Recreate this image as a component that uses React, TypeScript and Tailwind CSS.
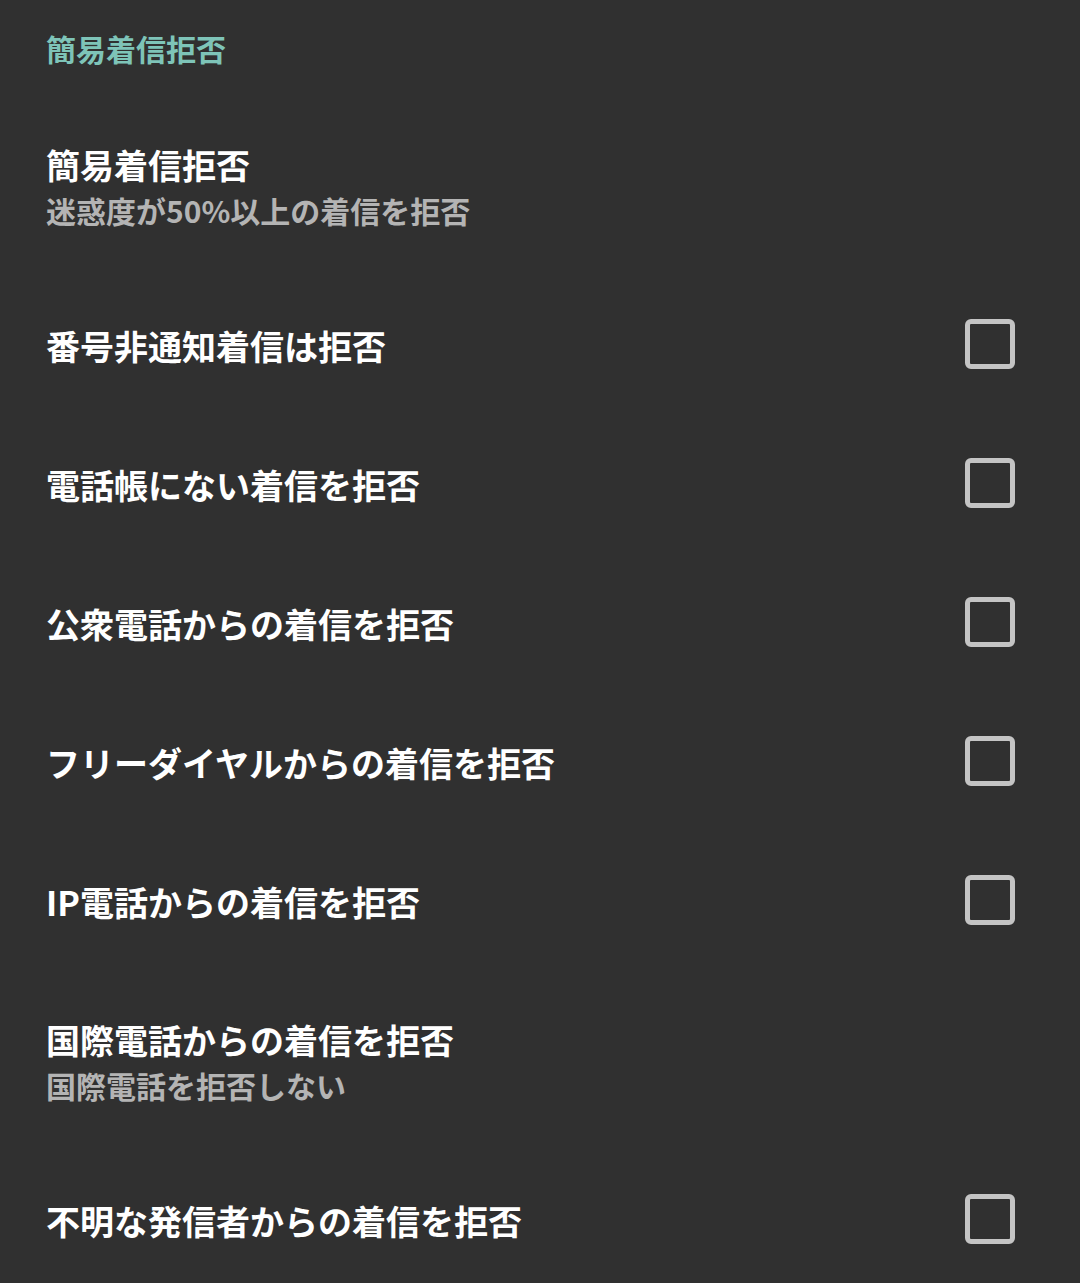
type Row = { title: string; sub?: string; check?: boolean }

const rows: Row[] = [
  { title: "簡易着信拒否", sub: "迷惑度が50%以上の着信を拒否" },
  { title: "番号非通知着信は拒否", check: true },
  { title: "電話帳にない着信を拒否", check: true },
  { title: "公衆電話からの着信を拒否", check: true },
  { title: "フリーダイヤルからの着信を拒否", check: true },
  { title: "IP電話からの着信を拒否", check: true },
  { title: "国際電話からの着信を拒否", sub: "国際電話を拒否しない" },
  { title: "不明な発信者からの着信を拒否", check: true },
]

function Checkbox() {
  return <span className="block w-[50px] h-[50px] mb-[3px] rounded-[6px] border-[5px] border-[#c4c4c4]" />
}

export default function App() {
  return (
    <div
      className="w-[1080px] h-[1283px] bg-[#303030] overflow-hidden"
      style={{ fontFamily: '"Noto Sans CJK JP", "Noto Sans", sans-serif' }}
    >
      <div className="h-[96px] flex items-center pl-[46px]">
        <span className="text-[30px] font-bold text-[#7ec4b8] leading-none">簡易着信拒否</span>
      </div>
      {rows.map((r, i) => (
        <div
          key={i}
          className={`flex items-center justify-between pl-[46px] pr-[65px] ${r.sub ? "h-[180px]" : "h-[139px]"}`}
        >
          <div className="flex flex-col gap-[13px]">
            <span className="text-[34px] font-bold text-white leading-none">{r.title}</span>
            {r.sub && <span className="text-[30px] font-bold text-[#b4b4b4] leading-none">{r.sub}</span>}
          </div>
          {r.check && <Checkbox />}
        </div>
      ))}
    </div>
  )
}
